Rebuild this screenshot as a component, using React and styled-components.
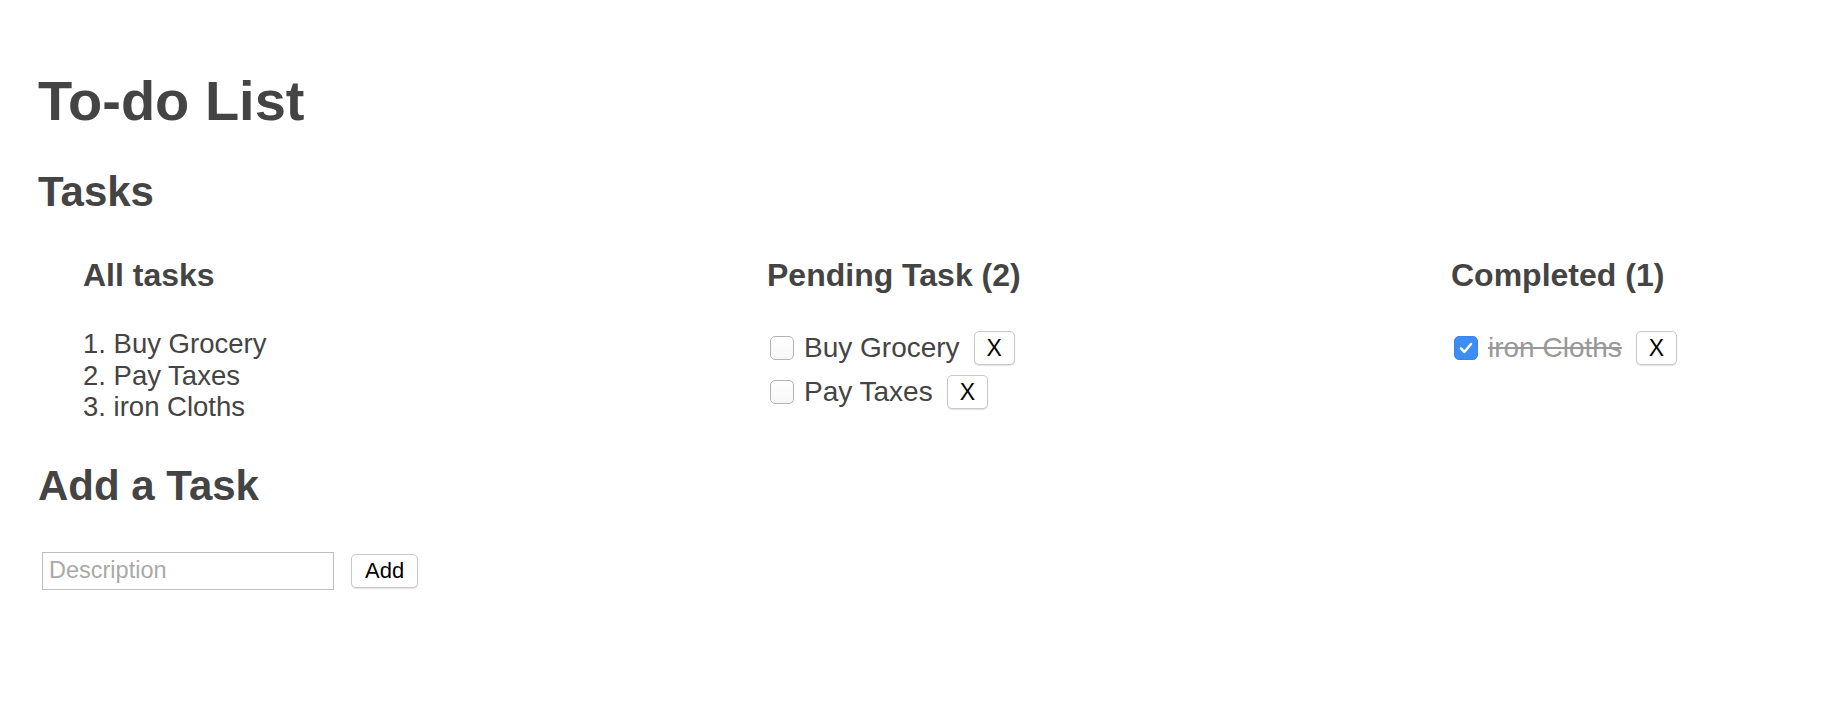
import React, { useState } from 'react'
import styled, { createGlobalStyle } from 'styled-components';

const GlobalStyle = createGlobalStyle`
  html, body {
    margin: 0;
    padding: 0;
    background: #fff;
  }
  body {
    font-family: "Liberation Sans", Arial, Helvetica, sans-serif;
    color: #444;
  }
`;

const Page = styled.div`
  padding: 69px 0 0 38px;
`;

const Title = styled.h1`
  margin: 0;
  font-size: 56px;
  line-height: 64px;
  font-weight: bold;
  color: #444;
`;

const SectionTitle = styled.h2`
  margin: ${p => p.$top}px 0 0 0;
  font-size: 42px;
  line-height: 48px;
  font-weight: bold;
  color: #444;
`;

const Columns = styled.div`
  display: grid;
  grid-template-columns: 684px 684px 1fr;
  padding-left: 45px;
  margin-top: 41px;
`;

const Column = styled.div`
  display: flex;
  flex-direction: column;
`;

const ColumnTitle = styled.h3`
  margin: 0;
  font-size: 32px;
  line-height: 37px;
  font-weight: bold;
  color: #444;
`;

const AllList = styled.ol`
  margin: 34px 0 0 0;
  padding: 0;
  list-style-position: inside;
  font-size: 27.5px;
  line-height: 31.5px;
`;

const Rows = styled.div`
  margin-top: 32px;
  display: flex;
  flex-direction: column;
`;

const Row = styled.div`
  display: flex;
  align-items: center;
  height: 44px;
`;

const Box = styled.span`
  box-sizing: border-box;
  width: 24px;
  height: 24px;
  margin: 0 10px 0 3px;
  border-radius: 5px;
  border: 1px solid ${p => (p.$checked ? '#3684ec' : '#b3b3b3')};
  background: ${p => (p.$checked ? '#3d8ef4' : 'linear-gradient(#fff, #f7f7f7)')};
  display: inline-flex;
  align-items: center;
  justify-content: center;
  cursor: pointer;
`;

const Label = styled.span`
  font-size: 28px;
  line-height: 32px;
  color: ${p => (p.$done ? '#999' : '#444')};
  text-decoration: ${p => (p.$done ? 'line-through' : 'none')};
`;

const SmallButton = styled.button`
  box-sizing: border-box;
  height: 34px;
  margin-left: ${p => p.$gap || 0}px;
  padding: 0 ${p => p.$pad}px;
  font-family: "Liberation Sans", Arial, sans-serif;
  font-size: ${p => p.$size || 22}px;
  line-height: 32px;
  color: #000;
  background: #fff;
  border: 1px solid #c9c9c9;
  border-radius: 5px;
  box-shadow: 0 1px 1px rgba(0, 0, 0, 0.12);
  cursor: pointer;
`;

const AddRow = styled.div`
  display: flex;
  align-items: center;
  margin: 42px 0 0 4px;
`;

const Input = styled.input`
  box-sizing: border-box;
  width: 292px;
  height: 38px;
  padding: 0 6px;
  font-family: "Liberation Sans", Arial, sans-serif;
  font-size: 23.5px;
  color: #444;
  border: 1px solid #bdbdbd;
  border-radius: 0;
  outline: none;
  &::placeholder {
    color: #a9a9a9;
  }
`;

const Check = ({ checked, onClick }) => (
  <Box $checked={checked} onClick={onClick}>
    {checked && (
      <svg width="18" height="18" viewBox="0 0 16 16">
        <path d="M3.5 8.3l3 3.2L12.5 4.5" fill="none" stroke="#fff" strokeWidth="2.2" strokeLinecap="round" strokeLinejoin="round" />
      </svg>
    )}
  </Box>
);

export default function App() {
  const [tasks, setTasks] = useState([
    { id: 1, text: 'Buy Grocery', done: false },
    { id: 2, text: 'Pay Taxes', done: false },
    { id: 3, text: 'iron Cloths', done: true },
  ]);
  const [desc, setDesc] = useState('');

  const toggle = (id) => setTasks(tasks.map(t => (t.id === id ? { ...t, done: !t.done } : t)));
  const remove = (id) => setTasks(tasks.filter(t => t.id !== id));
  const add = () => {
    if (!desc.trim()) return;
    setTasks([...tasks, { id: Date.now(), text: desc.trim(), done: false }]);
    setDesc('');
  };

  const pending = tasks.filter(t => !t.done);
  const completed = tasks.filter(t => t.done);

  return (
    <Page>
      <GlobalStyle />
      <Title>To-do List</Title>
      <SectionTitle $top={35}>Tasks</SectionTitle>
      <Columns>
        <Column>
          <ColumnTitle>All tasks</ColumnTitle>
          <AllList>
            {tasks.map(t => <li key={t.id}>{t.text}</li>)}
          </AllList>
        </Column>
        <Column>
          <ColumnTitle>Pending Task ({pending.length})</ColumnTitle>
          <Rows>
            {pending.map(t => (
              <Row key={t.id}>
                <Check checked={false} onClick={() => toggle(t.id)} />
                <Label>{t.text}</Label>
                <SmallButton $gap={14} $pad={12} $size={23} onClick={() => remove(t.id)}>X</SmallButton>
              </Row>
            ))}
          </Rows>
        </Column>
        <Column>
          <ColumnTitle>Completed ({completed.length})</ColumnTitle>
          <Rows>
            {completed.map(t => (
              <Row key={t.id}>
                <Check checked onClick={() => toggle(t.id)} />
                <Label $done>{t.text}</Label>
                <SmallButton $gap={14} $pad={12} $size={23} onClick={() => remove(t.id)}>X</SmallButton>
              </Row>
            ))}
          </Rows>
        </Column>
      </Columns>
      <SectionTitle $top={39}>Add a Task</SectionTitle>
      <AddRow>
        <Input placeholder="Description" value={desc} onChange={e => setDesc(e.target.value)} />
        <SmallButton $gap={17} $pad={13} onClick={add}>Add</SmallButton>
      </AddRow>
    </Page>
  );
}
